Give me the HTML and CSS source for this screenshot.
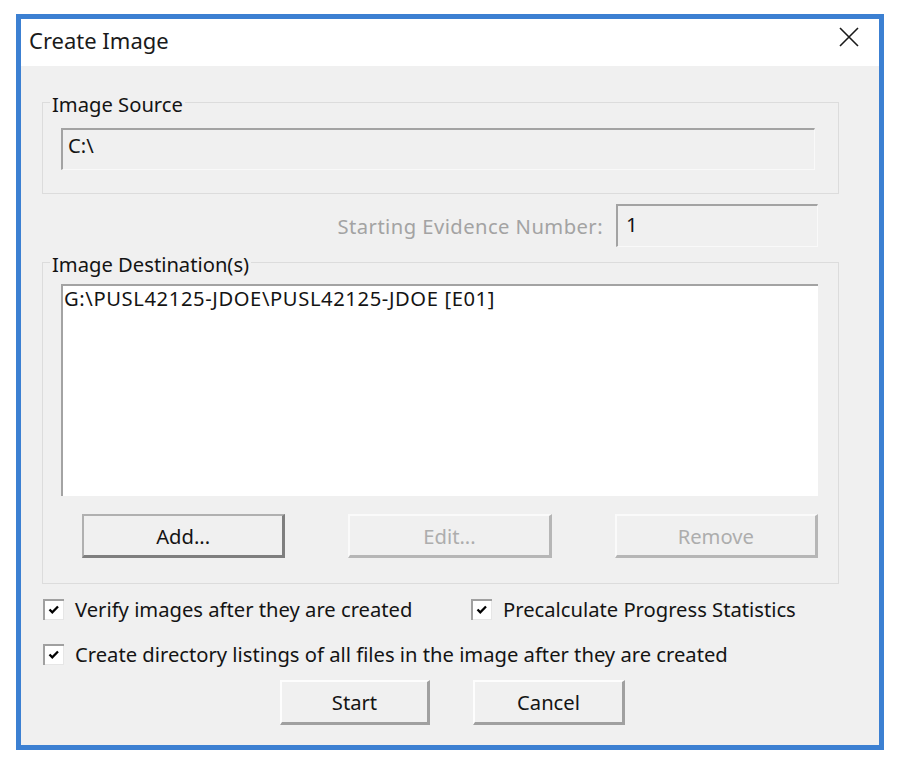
FILE: index.html
```html
<!DOCTYPE html>
<html lang="en">
<head>
<meta charset="utf-8">
<title>Create Image</title>
<link rel="stylesheet" href="styles.css">
</head>
<body>
<div class="window">
  <div class="titlebar">
    <span class="title">Create Image</span>
    <svg class="close" viewBox="0 0 20 20" width="20" height="20"><path d="M1 1L19 19M19 1L1 19" stroke="#1a1a1a" stroke-width="1.6" fill="none"/></svg>
  </div>
  <div class="client">
    <fieldset class="group group-source">
      <legend>Image Source</legend>
      <div class="group-body source-body">
        <div class="edit">C:\</div>
      </div>
    </fieldset>
    <div class="evidence-row">
      <span class="disabled-label">Starting Evidence Number:</span>
      <div class="edit evidence">1</div>
    </div>
    <fieldset class="group group-dest">
      <legend>Image Destination(s)</legend>
      <div class="group-body dest-body">
        <div class="listbox">
          <div class="list-item">G:\PUSL42125-JDOE\PUSL42125-JDOE [E01]</div>
        </div>
        <div class="btn-row">
          <button class="btn btn-default">Add...</button>
          <button class="btn" disabled>Edit...</button>
          <button class="btn" disabled>Remove</button>
        </div>
      </div>
    </fieldset>
    <div class="check-row first-row">
      <label class="check wide">
        <svg class="box" viewBox="0 0 21 21" width="21" height="21"><rect width="21" height="21" fill="#fff"/><path d="M0 0H21V2H2V21H0Z" fill="#a0a0a0"/><path d="M21 2V21H2V20H20V2Z" fill="#e6e6e6"/><path d="M6.5 10.5L9.3 13.3L15 7.5" stroke="#000" stroke-width="2.3" fill="none"/></svg>
        <span>Verify images after they are created</span>
      </label>
      <label class="check">
        <svg class="box" viewBox="0 0 21 21" width="21" height="21"><rect width="21" height="21" fill="#fff"/><path d="M0 0H21V2H2V21H0Z" fill="#a0a0a0"/><path d="M21 2V21H2V20H20V2Z" fill="#e6e6e6"/><path d="M6.5 10.5L9.3 13.3L15 7.5" stroke="#000" stroke-width="2.3" fill="none"/></svg>
        <span>Precalculate Progress Statistics</span>
      </label>
    </div>
    <div class="check-row second-row">
      <label class="check">
        <svg class="box" viewBox="0 0 21 21" width="21" height="21"><rect width="21" height="21" fill="#fff"/><path d="M0 0H21V2H2V21H0Z" fill="#a0a0a0"/><path d="M21 2V21H2V20H20V2Z" fill="#e6e6e6"/><path d="M6.5 10.5L9.3 13.3L15 7.5" stroke="#000" stroke-width="2.3" fill="none"/></svg>
        <span>Create directory listings of all files in the image after they are created</span>
      </label>
    </div>
    <div class="action-row">
      <button class="btn btn-start">Start</button>
      <button class="btn btn-cancel">Cancel</button>
    </div>
  </div>
</div>
</body>
</html>
```
FILE: styles.css
```css
* {
  box-sizing: border-box;
}

body {
  margin: 0;
  background: #ffffff;
  font-family: "Noto Sans", "Open Sans", sans-serif;
  font-size: 20.2px;
  color: #141414;
}

.window {
  margin: 14px 0 0 16px;
  width: 868px;
  height: 736px;
  border: 5px solid #3c80d2;
  background: #f0f0f0;
  display: flex;
  flex-direction: column;
}

.titlebar {
  height: 47px;
  background: #ffffff;
  display: flex;
  align-items: flex-start;
  justify-content: space-between;
  padding: 6px 20px 0 8px;
}

.title {
  font-size: 22px;
  line-height: 30px;
  color: #1a1a1a;
}

.close {
  display: block;
  margin-top: 2px;
}

.client {
  flex: 1;
  display: flex;
  flex-direction: column;
  padding: 0 40px 0 21px;
}

.group {
  margin: 0;
  padding: 0;
  border: 1px solid #dcdcdc;
  min-width: 0;
}

.group legend {
  padding: 4px 2px 0;
  margin-left: 7px;
  line-height: 24px;
}

.group-source {
  margin-top: 22px;
}

.source-body {
  padding: 12px 23px 23px 18px;
}

.edit {
  height: 42px;
  border-top: 2px solid #a3a3a3;
  border-left: 2px solid #a3a3a3;
  border-right: 1px solid #f9f9f9;
  border-bottom: 1px solid #f9f9f9;
  padding: 3px 5px 0;
  line-height: 24px;
}

.evidence-row {
  display: flex;
  justify-content: flex-end;
  align-items: center;
  gap: 13px;
  margin-top: 10px;
  padding-right: 21px;
}

.disabled-label {
  color: #a3a3a3;
  letter-spacing: 0.45px;
}

.edit.evidence {
  width: 202px;
  height: 43px;
  padding: 6px 8px 0;
}

.group-dest {
  margin-top: 1px;
}

.dest-body {
  padding: 8px 20px 25px 18px;
}

.listbox {
  height: 212px;
  background: #ffffff;
  border-top: 2px solid #a3a3a3;
  border-left: 2px solid #a3a3a3;
  padding: 0 0 0 1px;
  line-height: 24px;
}

.list-item {
  letter-spacing: 0.6px;
}

.btn-row {
  display: flex;
  gap: 63px;
  padding-left: 21px;
  margin-top: 18px;
}

.btn {
  width: 204px;
  height: 44px;
  padding: 0;
  font: inherit;
  color: #141414;
  background: #f0f0f0;
  border-style: solid;
  border-width: 2px 3px 3px 2px;
  border-color: #fdfdfd #a0a0a0 #a0a0a0 #fdfdfd;
}

.btn-default {
  border-color: #b0b0b0 #7f7f7f #7f7f7f #b0b0b0;
}

.btn:disabled {
  color: #adadad;
  border-color: #fafafa #b6b6b6 #b6b6b6 #fafafa;
}

.check-row {
  display: flex;
  align-items: center;
  height: 28px;
}

.first-row {
  margin-top: 11px;
}

.second-row {
  margin-top: 17px;
}

.check {
  display: flex;
  align-items: center;
  gap: 11px;
}

.check.wide {
  width: 428px;
}

.box {
  display: block;
  margin-left: 1px;
  flex: none;
}

.action-row {
  display: flex;
  gap: 43px;
  padding-left: 238px;
  margin-top: 12px;
}

.btn-start {
  width: 150px;
  height: 45px;
}

.btn-cancel {
  width: 152px;
  height: 45px;
}
```
